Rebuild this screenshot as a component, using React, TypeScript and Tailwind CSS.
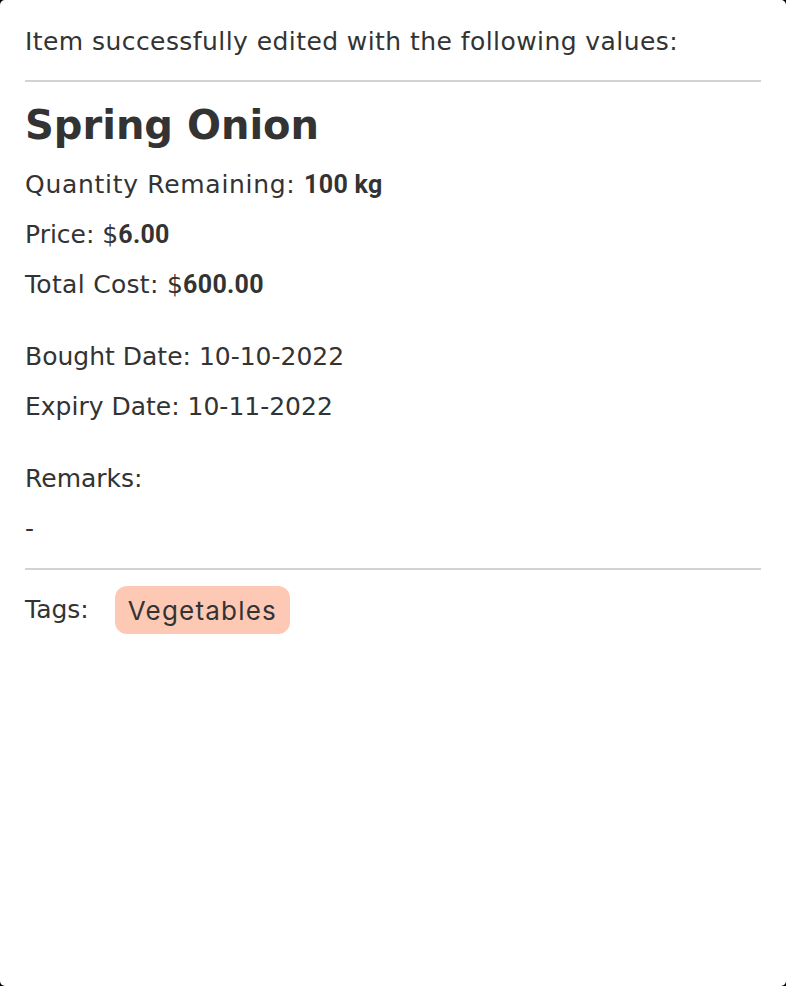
import React from "react";

const body = "font-['DejaVu_Sans',sans-serif]";
const num = "font-['Roboto',sans-serif] font-bold tracking-[0.3px]";

function Row({ children, className = "" }: { children: React.ReactNode; className?: string }) {
  return <p className={`text-[25px] leading-[50px] ${className}`}>{children}</p>;
}

export default function App() {
  return (
    <div className="min-h-screen bg-black">
      <div className={`flex h-[986px] flex-col rounded-[5px] bg-white px-[25px] pt-[17px] text-[#333333] ${body}`}>
        <Row className="tracking-[0.43px]">Item successfully edited with the following values:</Row>
        <div className="mt-[13px] h-[2px] bg-[#d3d3d3]" />

        <h1 className="mt-[18px] text-[40px] font-bold leading-[50px]">Spring Onion</h1>

        <div className="mt-[10px] flex flex-col">
          <Row>
            <span className="tracking-[0.7px]">Quantity Remaining: </span>
            <span className={num}>100 kg</span>
          </Row>
          <Row>
            Price: $<span className={num}>6.00</span>
          </Row>
          <Row>
            <span className="tracking-[0.3px]">Total Cost: $</span>
            <span className={num}>600.00</span>
          </Row>
        </div>

        <div className="mt-[22px] flex flex-col">
          <Row>Bought Date: 10-10-2022</Row>
          <Row>Expiry Date: 10-11-2022</Row>
        </div>

        <div className="mt-[22px] flex flex-col">
          <Row>Remarks:</Row>
          <Row>-</Row>
        </div>

        <div className="mt-[14px] h-[2px] bg-[#d3d3d3]" />

        <div className="mt-[16px] flex items-center gap-[26px]">
          <span className="text-[25px]">Tags:</span>
          <span className="flex h-[48px] items-center rounded-[12px] bg-[#fec9b4] px-[13px] font-['Inter',sans-serif] text-[26px] tracking-[1.2px]">
            Vegetables
          </span>
        </div>
      </div>
    </div>
  );
}
